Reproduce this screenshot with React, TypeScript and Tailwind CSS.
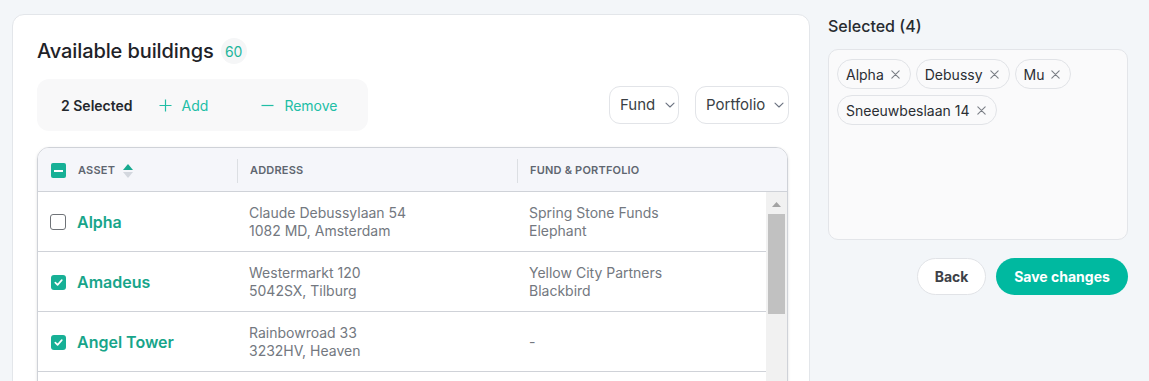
import React from "react";

const rows = [
  { name: "Alpha", checked: false, a1: "Claude Debussylaan 54", a2: "1082 MD, Amsterdam", f1: "Spring Stone Funds", f2: "Elephant" },
  { name: "Amadeus", checked: true, a1: "Westermarkt 120", a2: "5042SX, Tilburg", f1: "Yellow City Partners", f2: "Blackbird" },
  { name: "Angel Tower", checked: true, a1: "Rainbowroad 33", a2: "3232HV, Heaven", f1: "-", f2: "" },
];

const chips = ["Alpha", "Debussy", "Mu", "Sneeuwbeslaan 14"];

function Check({ checked }: { checked: boolean }) {
  if (checked) {
    return (
      <div className="w-[15px] h-[15px] rounded-[3px] bg-[#17b096] flex items-center justify-center">
        <svg width="11" height="11" viewBox="0 0 12 12" fill="none">
          <path d="M2.5 6.2 L5 8.6 L9.6 3.4" stroke="white" strokeWidth="1.8" strokeLinecap="round" strokeLinejoin="round" />
        </svg>
      </div>
    );
  }
  return <div className="w-[16px] h-[16px] rounded-[3px] border-[1.5px] border-[#6f7378] bg-white" />;
}

function Chevron() {
  return (
    <svg width="12" height="12" viewBox="0 0 12 12" fill="none">
      <path d="M2 4.2 L6 8 L10 4.2" stroke="#6b7280" strokeWidth="1.1" strokeLinecap="round" strokeLinejoin="round" />
    </svg>
  );
}

function XIcon() {
  return (
    <svg width="11" height="11" viewBox="0 0 12 12" fill="none">
      <path d="M2 2 L10 10 M10 2 L2 10" stroke="#7b7f86" strokeWidth="1.2" strokeLinecap="round" />
    </svg>
  );
}

export default function App() {
  return (
    <div
      className="w-[1149px] h-[381px] overflow-hidden bg-[#f3f6f9] flex items-start"
      style={{ fontFamily: "Inter, 'Noto Sans', sans-serif" }}
    >
      {/* Main card */}
      <div className="ml-[12px] mt-[14px] w-[798px] h-[420px] bg-white border border-[#e3e6ea] rounded-[12px] pl-[24px] pr-[21px] pt-[22px] flex flex-col shrink-0">
        <div className="flex items-center h-[28px]">
          <h1 className="text-[20px] leading-[28px] text-[#1e2227] font-medium tracking-[-0.1px]">Available buildings</h1>
          <span className="ml-[7px] w-[26px] h-[26px] rounded-full bg-[#f5f6f7] text-[#1fb59c] text-[14px] flex items-center justify-center">60</span>
        </div>

        <div className="mt-[14px] flex items-center justify-between">
          <div className="w-[331px] h-[52px] rounded-[12px] bg-[#f8f8f9] flex items-center pl-[24px] pt-[1px] text-[14px]">
            <span className="font-semibold text-[#24282d]">2 Selected</span>
            <span className="ml-[26px] flex items-center text-[#21bea6]">
              <svg width="13" height="13" viewBox="0 0 13 13" fill="none">
                <path d="M6.5 0.5 V12.5 M0.5 6.5 H12.5" stroke="#21bea6" strokeWidth="1.2" />
              </svg>
              <span className="ml-[10px]">Add</span>
            </span>
            <span className="ml-[53px] flex items-center text-[#21bea6]">
              <svg width="13" height="13" viewBox="0 0 13 13" fill="none">
                <path d="M0.5 6.5 H12.5" stroke="#21bea6" strokeWidth="1.2" />
              </svg>
              <span className="ml-[10px]">Remove</span>
            </span>
          </div>
          <div className="flex items-center gap-[16px] -mr-[1px]">
            <div className="h-[38px] w-[70px] border border-[#e2e4e8] rounded-[11px] flex items-center pl-[10px] gap-[9px] text-[15px] text-[#3a3f45]">
              <span>Fund</span>
              <Chevron />
            </div>
            <div className="h-[38px] w-[94px] border border-[#e2e4e8] rounded-[11px] flex items-center pl-[10px] gap-[8px] text-[15px] text-[#3a3f45]">
              <span>Portfolio</span>
              <Chevron />
            </div>
          </div>
        </div>

        {/* Table */}
        <div className="mt-[16px] border border-[#cfd2d8] rounded-t-[12px] shadow-[0_1px_3px_rgba(0,0,0,0.12)] overflow-hidden flex flex-col">
          <div className="h-[46px] pt-[2px] bg-[#f5f6fa] border-b border-[#cfd2d8] flex items-center text-[11px] font-semibold text-[#5f6670] tracking-[0.2px]">
            <div className="w-[199px] flex items-center pl-[13px] h-full">
              <div className="w-[15px] h-[15px] rounded-[2px] bg-[#17b096] flex items-center justify-center">
                <div className="w-[9px] h-[2px] bg-white" />
              </div>
              <span className="ml-[12px]">ASSET</span>
              <span className="ml-[8px] flex flex-col gap-[2px]">
                <svg width="10" height="6" viewBox="0 0 10 6"><path d="M5 0 L10 6 H0 Z" fill="#17a98f" /></svg>
                <svg width="10" height="6" viewBox="0 0 10 6"><path d="M0 0 H10 L5 6 Z" fill="#d3d7de" /></svg>
              </span>
            </div>
            <div className="w-[280px] flex items-center h-full">
              <div className="w-px h-[24px] bg-[#dcdfe3]" />
              <span className="ml-[12px]">ADDRESS</span>
            </div>
            <div className="flex-1 flex items-center h-full">
              <div className="w-px h-[24px] bg-[#dcdfe3]" />
              <span className="ml-[12px]">FUND &amp; PORTFOLIO</span>
            </div>
          </div>
          <div className="flex">
            <div className="flex-1 flex flex-col">
              {rows.map((r) => (
                <div key={r.name} className="h-[60px] pt-[1px] border-b border-[#cfd2d8] flex items-center shrink-0">
                  <div className="w-[199px] flex items-center pl-[12px]">
                    <div className="w-[16px] flex justify-center">
                      <Check checked={r.checked} />
                    </div>
                    <span className="ml-[11px] text-[16px] font-semibold text-[#17a58a]">{r.name}</span>
                  </div>
                  <div className="w-[280px] pl-[12px] text-[14px] leading-[18px] text-[#737880]">
                    <div>{r.a1}</div>
                    <div>{r.a2}</div>
                  </div>
                  <div className="flex-1 pl-[12px] text-[14px] leading-[18px] text-[#737880]">
                    <div>{r.f1}</div>
                    {r.f2 && <div>{r.f2}</div>}
                  </div>
                </div>
              ))}
              <div className="h-[60px] bg-white shrink-0" />
            </div>
            <div className="w-[21px] bg-[#f1f1f1] flex flex-col items-center pt-[10px]">
              <svg width="9" height="5" viewBox="0 0 9 5"><path d="M4.5 0 L9 5 H0 Z" fill="#a3a3a3" /></svg>
              <div className="mt-[7px] w-[17px] h-[100px] bg-[#c1c1c1]" />
            </div>
          </div>
        </div>
      </div>

      {/* Right panel */}
      <div className="ml-[18px] mt-[14px] w-[300px] flex flex-col shrink-0">
        <div className="text-[16px] leading-[24px] font-medium text-[#272b30]">Selected (4)</div>
        <div className="mt-[11px] h-[191px] rounded-[10px] border border-[#e3e5e9] bg-[#fafafb] p-[8px] pt-[9px] flex flex-wrap content-start gap-x-[5px] gap-y-[6px]">
          {chips.map((c) => (
            <div key={c} className="h-[30px] rounded-full border border-[#e1e3e7] bg-[#fafafb] flex items-center pl-[8px] pr-[9px] gap-[6px] text-[14px] text-[#2a2e33]">
              <span>{c}</span>
              <XIcon />
            </div>
          ))}
        </div>
        <div className="mt-[18px] flex justify-end gap-[10px]">
          <button className="h-[37px] w-[69px] rounded-full border border-[#e1e3e7] bg-white text-[14px] font-bold text-[#3d4147]">Back</button>
          <button className="h-[37px] w-[132px] rounded-full bg-[#00b9a0] text-[14px] font-bold text-white">Save changes</button>
        </div>
      </div>
    </div>
  );
}
